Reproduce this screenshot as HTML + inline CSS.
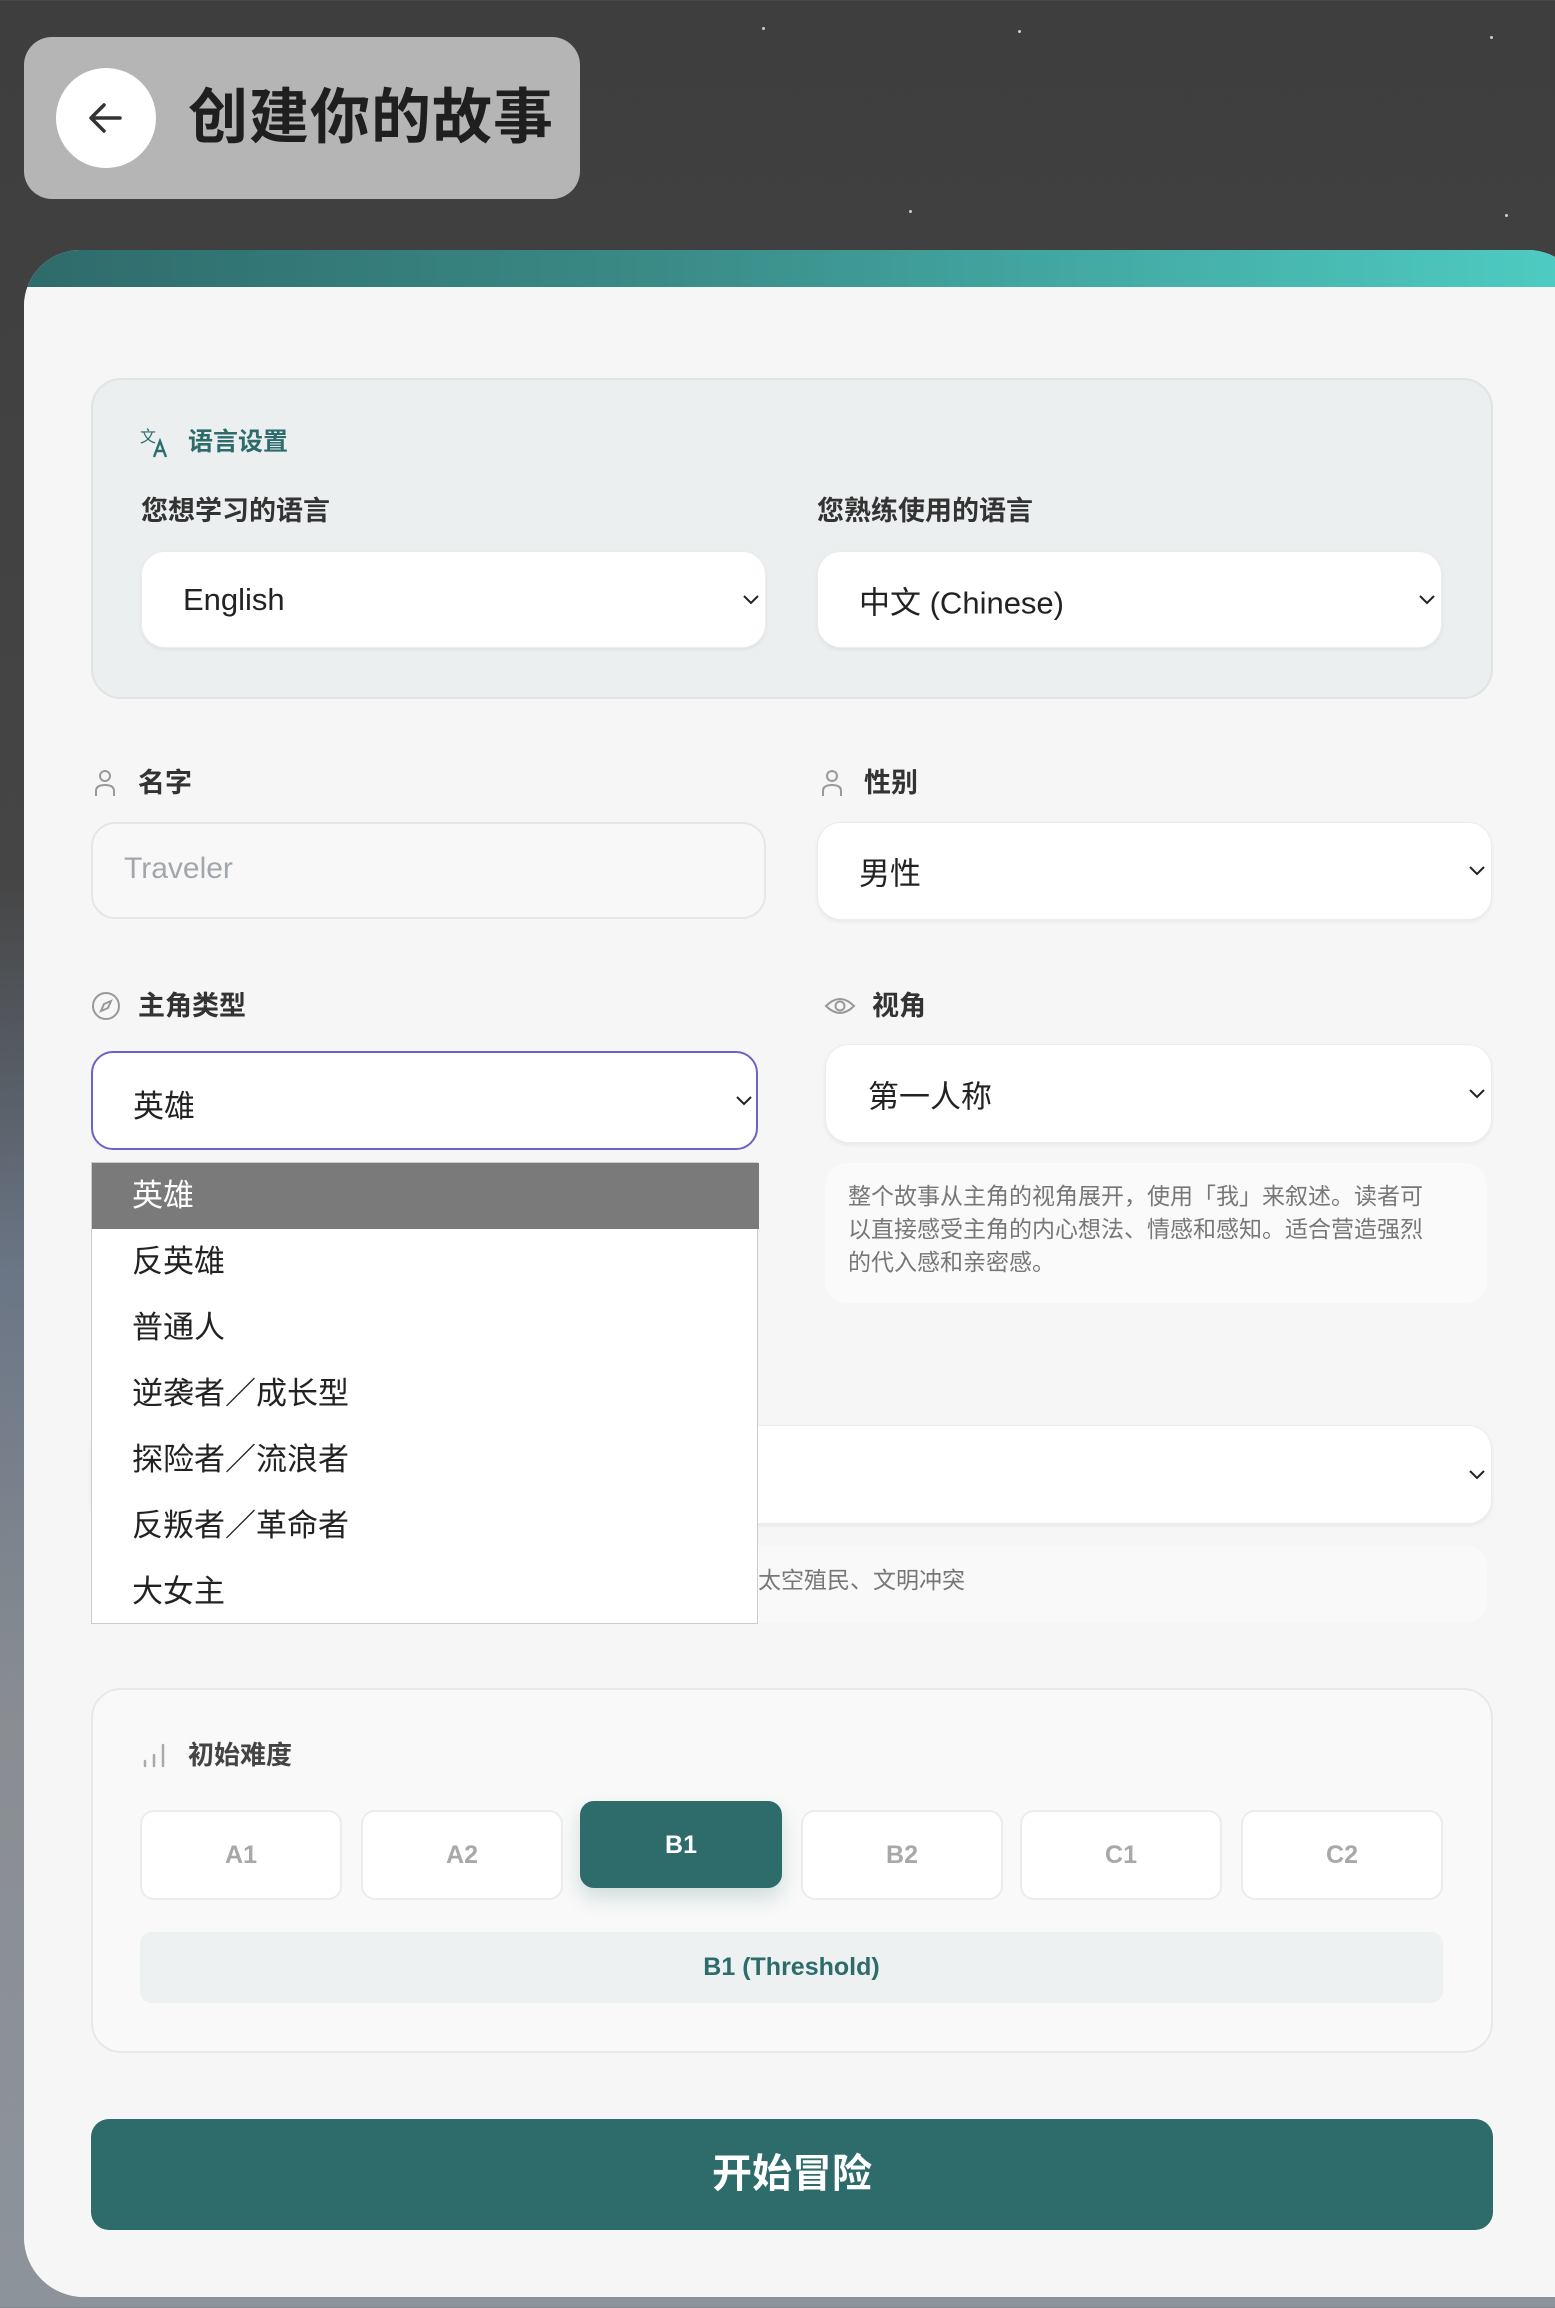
<!DOCTYPE html>
<html><head><meta charset="utf-8">
<style>
*{margin:0;padding:0;box-sizing:border-box}
html,body{width:1555px;height:2308px;overflow:hidden}
body{position:relative;font-family:"Liberation Sans","Noto Sans CJK SC",sans-serif;background:linear-gradient(180deg,#3e3e3e 0%,#454545 38%,#6a7585 55%,#8a8e93 75%,#8d939b 100%)}
.abs{position:absolute}
.star{position:absolute;width:3px;height:3px;background:#ccd;border-radius:50%}
.pill{left:24px;top:37px;width:556px;height:162px;background:#b5b5b5;border-radius:28px}
.back{left:56px;top:68px;width:100px;height:100px;border-radius:50%;background:#fff}
.title{left:188px;top:76px;font-size:60px;font-weight:bold;color:#1f1f1f;line-height:84px;letter-spacing:1px}
.card{left:24px;top:250px;width:1560px;height:2047px;background:#f6f6f6;border-radius:56px 56px 0 60px;overflow:hidden}
.band{left:0;top:0;width:100%;height:38px;background:linear-gradient(90deg,#2e6b6b 0%,#3a8a86 40%,#4ecdc4 100%)}
.panel{border-radius:30px;border:2px solid #e1e4e5}
.sel{background:#fff;border-radius:24px;box-shadow:0 2px 4px rgba(0,0,0,.06);border:1px solid #ececec}
.sel span{position:absolute;top:50%;transform:translateY(-50%);font-size:31px;color:#222}
.chev{position:absolute;top:50%;width:20px;height:14px;margin-top:-7px}
.lbl{font-size:27px;font-weight:bold;color:#333;line-height:36px}
.opt{position:absolute;left:0;width:667px;height:66px;font-size:31px;color:#222;line-height:66px;padding-left:40px}
.lvl{position:absolute;top:1810px;width:202px;height:90px;background:#fff;border:2px solid #ececec;border-radius:14px;text-align:center;line-height:86px;font-size:25px;font-weight:bold;color:#a8a8a8}
</style></head><body>
<div class="star" style="left:762px;top:27px"></div>
<div class="star" style="left:1018px;top:30px"></div>
<div class="star" style="left:1490px;top:36px"></div>
<div class="star" style="left:1505px;top:214px"></div>
<div class="star" style="left:909px;top:210px"></div>

<div class="abs pill"></div>
<div class="abs back">
<svg width="100" height="100" viewBox="0 0 100 100"><path d="M64 50H36M48 37L35 50L48 63" fill="none" stroke="#333" stroke-width="3.5" stroke-linecap="round" stroke-linejoin="round"/></svg>
</div>
<div class="abs title">创建你的故事</div>

<div class="abs card">
<div class="abs band"></div>
<div class="abs" style="left:0;top:37px;width:100%;height:2020px;background:#f6f6f6"></div>
</div>

<div class="abs panel" style="left:91px;top:378px;width:1402px;height:321px;background:#eceff0"></div>
<svg class="abs" style="left:140px;top:426px" width="34" height="34" viewBox="0 0 34 34"><text x="0" y="16" font-size="16" fill="#2e6b6b" font-family="Noto Sans CJK SC,sans-serif">文</text><path d="M14 31L20 15L26 31M16.5 25H23.5" fill="none" stroke="#2e6b6b" stroke-width="2.4"/></svg>
<div class="abs" style="left:188px;top:424px;font-size:25px;font-weight:bold;color:#2e6b6b;line-height:36px">语言设置</div>
<div class="abs lbl" style="left:141px;top:493px">您想学习的语言</div>
<div class="abs lbl" style="left:817px;top:493px">您熟练使用的语言</div>
<div class="abs sel" style="left:141px;top:551px;width:625px;height:97px"><span style="left:41px">English</span><svg class="chev" style="right:4px" viewBox="0 0 20 14"><path d="M3 3L10 10L17 3" fill="none" stroke="#222" stroke-width="2"/></svg></div>
<div class="abs sel" style="left:817px;top:551px;width:625px;height:97px"><span style="left:41px">中文 (Chinese)</span><svg class="chev" style="right:4px" viewBox="0 0 20 14"><path d="M3 3L10 10L17 3" fill="none" stroke="#222" stroke-width="2"/></svg></div>

<svg class="abs" style="left:93px;top:768px" width="24" height="30" viewBox="0 0 24 30"><circle cx="12" cy="8" r="5" fill="none" stroke="#999" stroke-width="2"/><path d="M3 28V23Q3 17 12 17Q21 17 21 23V28" fill="none" stroke="#999" stroke-width="2"/></svg>
<div class="abs lbl" style="left:138px;top:765px">名字</div>
<svg class="abs" style="left:820px;top:768px" width="24" height="30" viewBox="0 0 24 30"><circle cx="12" cy="8" r="5" fill="none" stroke="#999" stroke-width="2"/><path d="M3 28V23Q3 17 12 17Q21 17 21 23V28" fill="none" stroke="#999" stroke-width="2"/></svg>
<div class="abs lbl" style="left:864px;top:765px">性别</div>
<div class="abs" style="left:91px;top:822px;width:675px;height:97px;background:#f8f8f8;border:2px solid #e6e6e6;border-radius:24px"><span style="position:absolute;left:31px;top:28px;font-size:30px;color:#a3a7ad">Traveler</span></div>
<div class="abs sel" style="left:817px;top:822px;width:675px;height:98px"><span style="left:41px">男性</span><svg class="chev" style="right:4px" viewBox="0 0 20 14"><path d="M3 3L10 10L17 3" fill="none" stroke="#222" stroke-width="2"/></svg></div>

<svg class="abs" style="left:90px;top:990px" width="32" height="32" viewBox="0 0 32 32"><circle cx="16" cy="16" r="13" fill="none" stroke="#999" stroke-width="2"/><path d="M21 11L18 18L11 21L14 14Z" fill="none" stroke="#999" stroke-width="2"/></svg>
<div class="abs lbl" style="left:138px;top:988px">主角类型</div>
<svg class="abs" style="left:824px;top:994px" width="32" height="24" viewBox="0 0 32 24"><path d="M2 12Q16 -2 30 12Q16 26 2 12Z" fill="none" stroke="#999" stroke-width="2"/><circle cx="16" cy="12" r="4.5" fill="none" stroke="#999" stroke-width="2"/></svg>
<div class="abs lbl" style="left:872px;top:988px">视角</div>
<div class="abs" style="left:91px;top:1051px;width:667px;height:99px;background:#fff;border:2px solid #6a62c6;border-radius:22px"><span style="position:absolute;left:40px;top:28px;font-size:31px;color:#222">英雄</span><svg class="chev" style="right:2px" viewBox="0 0 20 14"><path d="M3 3L10 10L17 3" fill="none" stroke="#222" stroke-width="2"/></svg></div>
<div class="abs sel" style="left:825px;top:1044px;width:667px;height:99px"><span style="left:42px">第一人称</span><svg class="chev" style="right:4px" viewBox="0 0 20 14"><path d="M3 3L10 10L17 3" fill="none" stroke="#222" stroke-width="2"/></svg></div>
<div class="abs" style="left:825px;top:1163px;width:662px;height:140px;background:#fafafa;border-radius:22px"></div>
<div class="abs" style="left:848px;top:1180px;width:590px;font-size:23px;line-height:33px;color:#777">整个故事从主角的视角展开，使用「我」来叙述。读者可以直接感受主角的内心想法、情感和感知。适合营造强烈的代入感和亲密感。</div>

<div class="abs sel" style="left:91px;top:1425px;width:1401px;height:99px"><svg class="chev" style="right:4px" viewBox="0 0 20 14"><path d="M3 3L10 10L17 3" fill="none" stroke="#222" stroke-width="2"/></svg></div>
<div class="abs" style="left:91px;top:1546px;width:1396px;height:76px;background:#f9f9f9;border-radius:20px"></div>
<div class="abs" style="left:758px;top:1564px;font-size:23px;color:#777;line-height:33px">太空殖民、文明冲突</div>

<div class="abs" style="left:91px;top:1162px;width:667px;height:462px;background:#fff;border:1px solid #ccc">
<div class="opt" style="top:0;background:#7a7a7a;color:#fff">英雄</div>
<div class="opt" style="top:66px">反英雄</div>
<div class="opt" style="top:132px">普通人</div>
<div class="opt" style="top:198px">逆袭者／成长型</div>
<div class="opt" style="top:264px">探险者／流浪者</div>
<div class="opt" style="top:330px">反叛者／革命者</div>
<div class="opt" style="top:396px">大女主</div>
</div>

<div class="abs panel" style="left:91px;top:1688px;width:1402px;height:365px;background:#f9f9f9;border-color:#e8e8e8"></div>
<svg class="abs" style="left:140px;top:1740px" width="30" height="30" viewBox="0 0 30 30"><path d="M5 26V21M14 26V15M23 26V5" stroke="#aaa" stroke-width="2.5" stroke-linecap="round"/></svg>
<div class="abs" style="left:188px;top:1737px;font-size:26px;font-weight:bold;color:#444;line-height:36px">初始难度</div>
<div class="lvl" style="left:140px">A1</div>
<div class="lvl" style="left:361px">A2</div>
<div class="lvl" style="left:580px;top:1801px;height:87px;background:#2e6b6b;border-color:#2e6b6b;color:#fff;line-height:85px;box-shadow:0 10px 20px rgba(46,107,107,.2)">B1</div>
<div class="lvl" style="left:801px">B2</div>
<div class="lvl" style="left:1020px">C1</div>
<div class="lvl" style="left:1241px">C2</div>
<div class="abs" style="left:140px;top:1932px;width:1303px;height:71px;background:#eef1f1;border-radius:12px;text-align:center;line-height:71px;font-size:25px;font-weight:bold;color:#2e6b6b">B1 (Threshold)</div>

<div class="abs" style="left:91px;top:2119px;width:1402px;height:111px;background:#2e6b6b;border-radius:18px;text-align:center;line-height:111px;font-size:40px;font-weight:bold;color:#fff">开始冒险</div>
</body></html>
